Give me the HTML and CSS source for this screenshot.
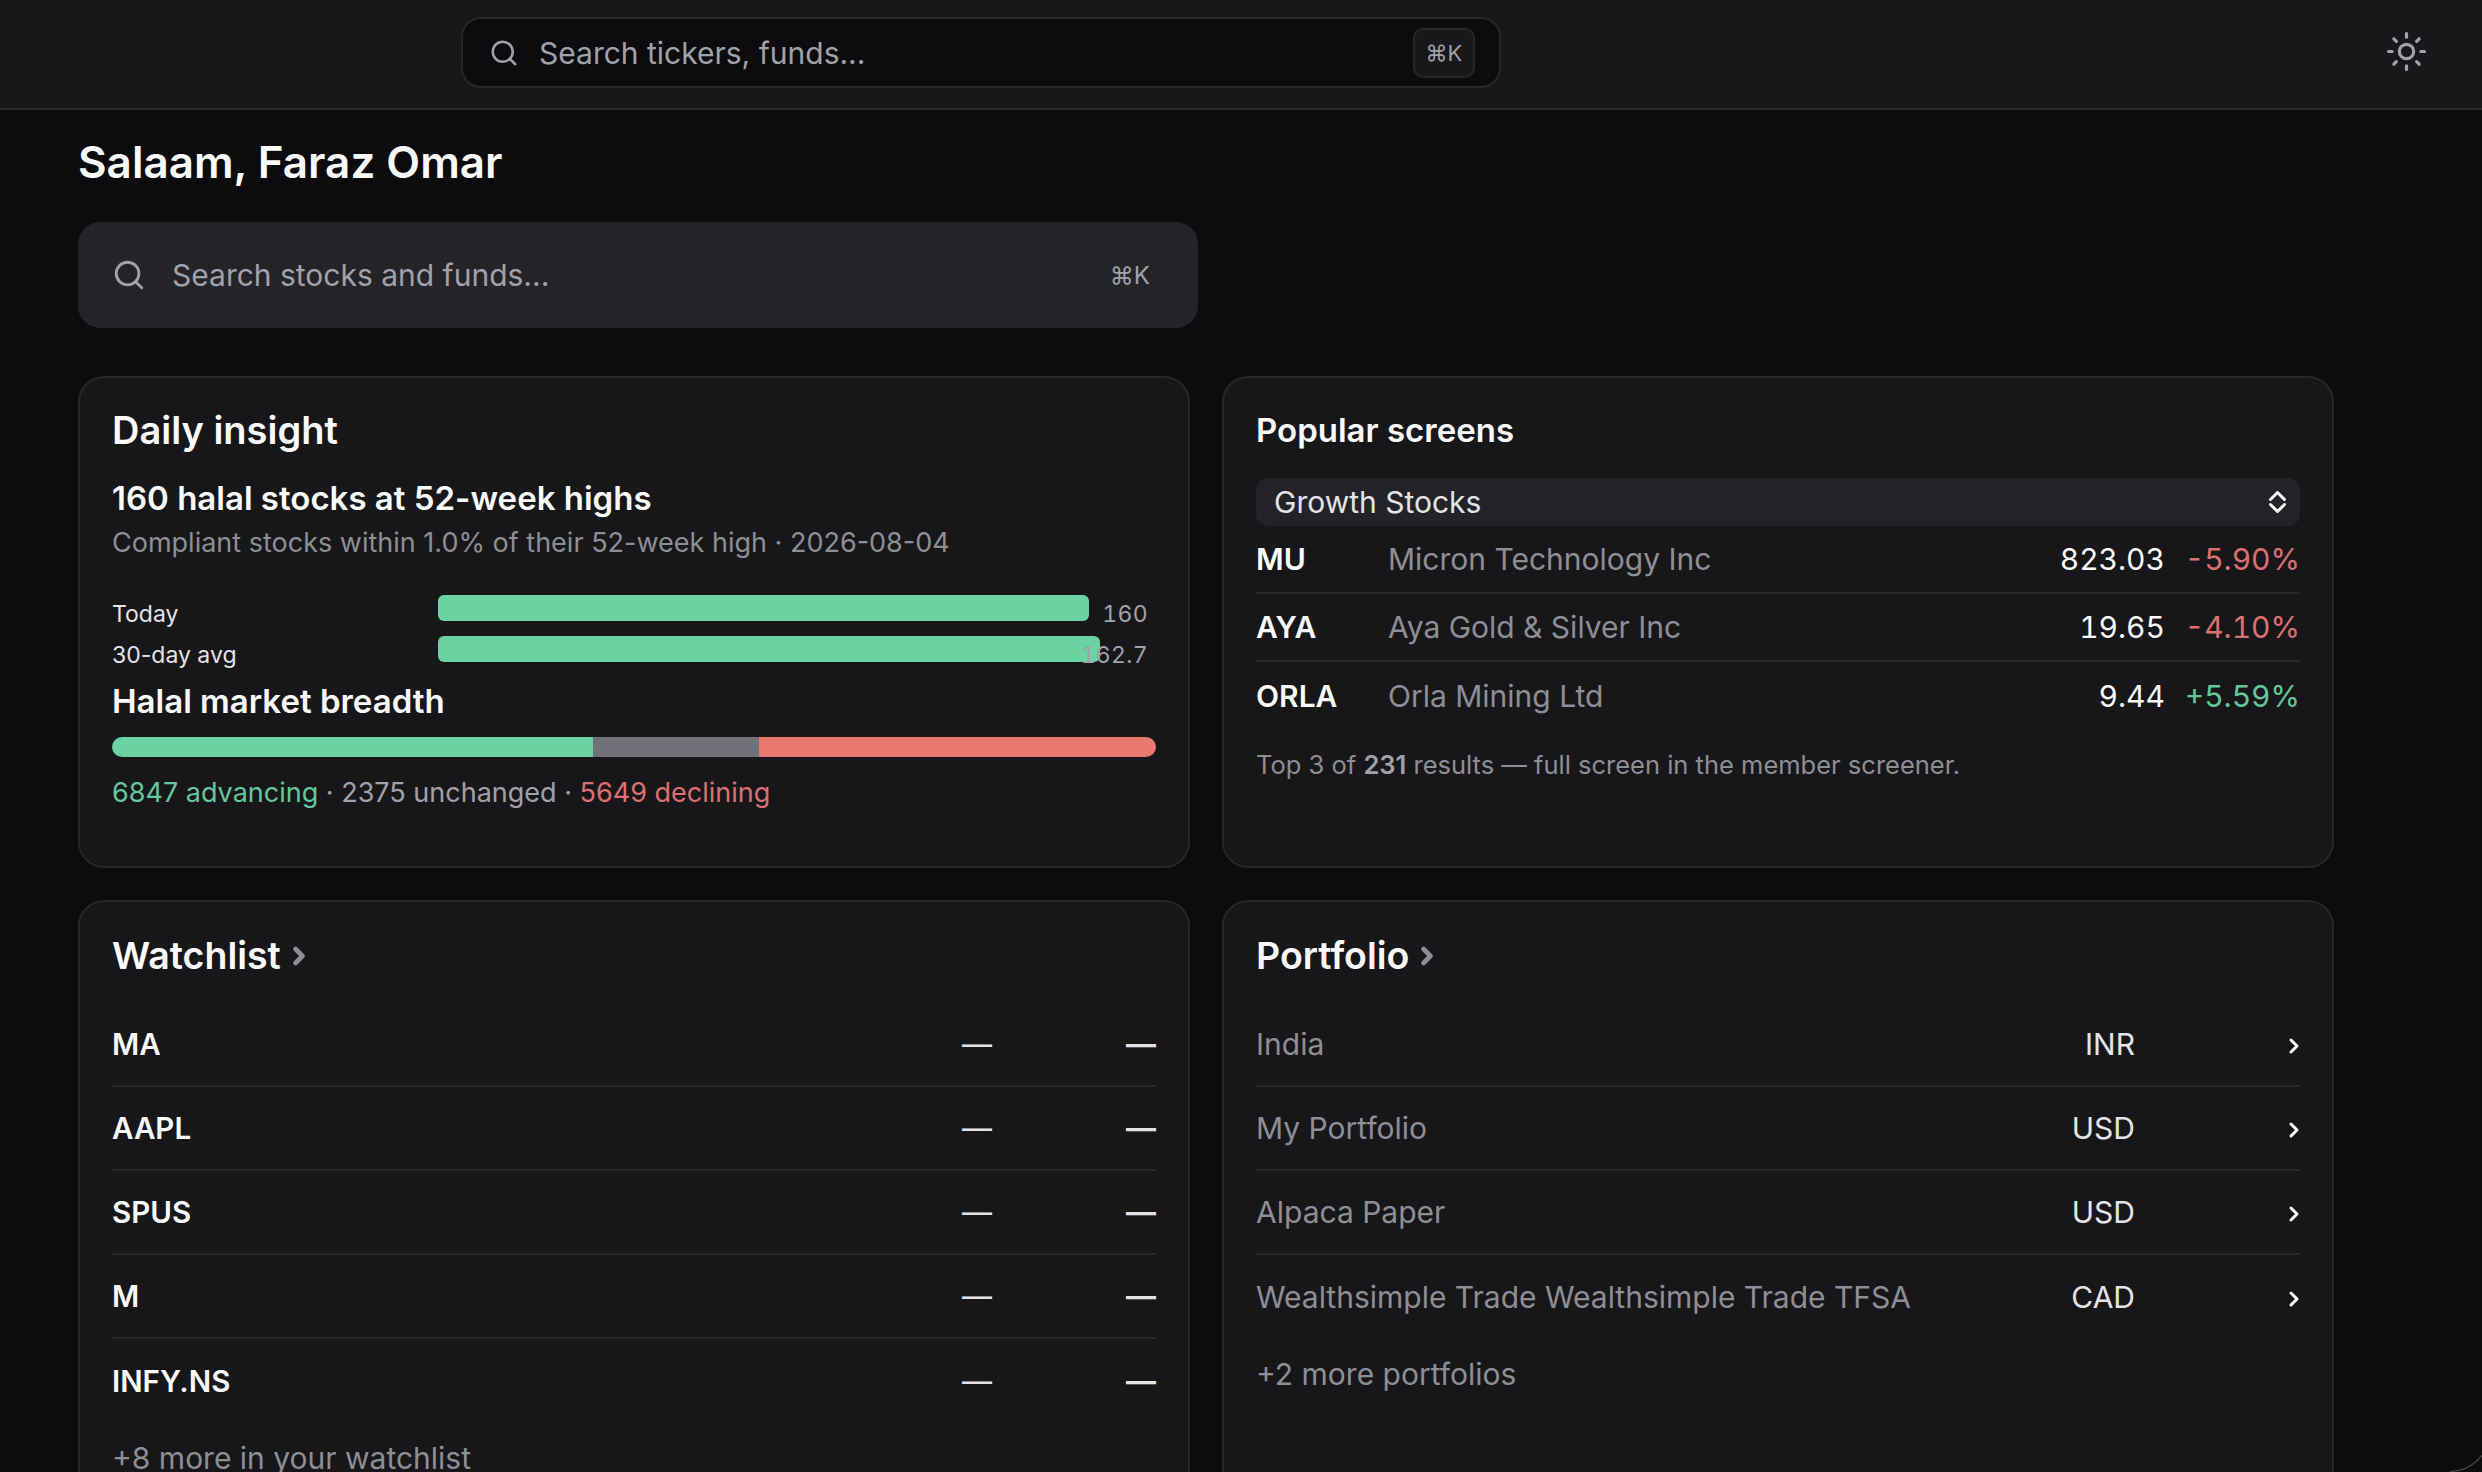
FILE: index.html
```html
<!DOCTYPE html>
<html lang="en">
<head>
<meta charset="utf-8">
<title>Dashboard</title>
<link rel="stylesheet" href="styles.css">
</head>
<body>
<svg width="0" height="0" class="defs">
  <symbol id="i-search" viewBox="0 0 24 24"><circle cx="11" cy="11" r="8"/><path d="m21 21-4.3-4.3"/></symbol>
  <symbol id="i-right" viewBox="0 0 24 24"><path d="m9 18 6-6-6-6"/></symbol>
</svg>
<header class="topbar">
  <div class="top-search">
    <svg class="icon ic-top"><use href="#i-search"/></svg>
    <span class="top-search-text">Search tickers, funds...</span>
    <kbd class="kbd">⌘K</kbd>
  </div>
  <svg class="sun" viewBox="0 0 24 24"><circle cx="12" cy="12" r="4"/><path d="M12 2v2M12 20v2M4.93 4.93l1.41 1.41M17.66 17.66l1.41 1.41M2 12h2M20 12h2M6.34 17.66l-1.41 1.41M19.07 4.93l-1.41 1.41"/></svg>
</header>
<main class="main">
  <h1 class="greeting">Salaam, Faraz Omar</h1>
  <div class="big-search">
    <svg class="icon ic-big"><use href="#i-search"/></svg>
    <span class="big-search-text">Search stocks and funds...</span>
    <span class="big-kbd">⌘K</span>
  </div>
  <div class="grid">
    <section class="card">
      <h2 class="card-title">Daily insight</h2>
      <h3 class="insight-title">160 halal stocks at 52-week highs</h3>
      <p class="insight-sub">Compliant stocks within 1.0% of their 52-week high · 2026-08-04</p>
      <div class="bars">
        <div class="bar-row">
          <span class="bar-label">Today</span>
          <div class="bar-track"><div class="bar-fill" style="width:98.3%"></div></div>
          <span class="bar-value">160</span>
        </div>
        <div class="bar-row">
          <span class="bar-label">30-day avg</span>
          <div class="bar-track"><div class="bar-fill" style="width:100%"></div></div>
          <span class="bar-value">162.7</span>
        </div>
      </div>
      <h3 class="breadth-title">Halal market breadth</h3>
      <div class="breadth">
        <div class="seg seg-up" style="width:46.1%"></div>
        <div class="seg seg-flat" style="width:15.9%"></div>
        <div class="seg seg-down" style="width:38%"></div>
      </div>
      <p class="legend"><span class="up">6847 advancing</span> · 2375 unchanged · <span class="down">5649 declining</span></p>
    </section>

    <section class="card">
      <h2 class="card-title-sm">Popular screens</h2>
      <div class="select">
        <span>Growth Stocks</span>
        <svg class="updown" viewBox="0 0 17 22"><path d="M1.5 8.5 8.5 1.5l7 7M1.5 13.5l7 7 7-7"/></svg>
      </div>
      <div class="screen-row">
        <span class="sym">MU</span><span class="name">Micron Technology Inc</span>
        <span class="price">823.03</span><span class="pct down">-5.90%</span>
      </div>
      <div class="screen-row">
        <span class="sym">AYA</span><span class="name">Aya Gold &amp; Silver Inc</span>
        <span class="price">19.65</span><span class="pct down">-4.10%</span>
      </div>
      <div class="screen-row">
        <span class="sym">ORLA</span><span class="name">Orla Mining Ltd</span>
        <span class="price">9.44</span><span class="pct up">+5.59%</span>
      </div>
      <p class="note">Top 3 of <b>231</b> results — full screen in the member screener.</p>
    </section>

    <section class="card">
      <h2 class="link-title">Watchlist <svg class="icon ic-head"><use href="#i-right"/></svg></h2>
      <div class="list">
        <div class="list-row"><span class="sym sym-wide">MA</span><span class="dash">—</span><span class="dash dash-b">—</span></div>
        <div class="list-row"><span class="sym sym-wide">AAPL</span><span class="dash">—</span><span class="dash dash-b">—</span></div>
        <div class="list-row"><span class="sym sym-wide">SPUS</span><span class="dash">—</span><span class="dash dash-b">—</span></div>
        <div class="list-row"><span class="sym sym-wide">M</span><span class="dash">—</span><span class="dash dash-b">—</span></div>
        <div class="list-row"><span class="sym sym-wide">INFY.NS</span><span class="dash">—</span><span class="dash dash-b">—</span></div>
      </div>
      <p class="more">+8 more in your watchlist</p>
    </section>

    <section class="card">
      <h2 class="link-title">Portfolio <svg class="icon ic-head"><use href="#i-right"/></svg></h2>
      <div class="list">
        <div class="list-row"><span class="pf-name">India</span><span class="ccy">INR</span><svg class="icon ic-row"><use href="#i-right"/></svg></div>
        <div class="list-row"><span class="pf-name">My Portfolio</span><span class="ccy">USD</span><svg class="icon ic-row"><use href="#i-right"/></svg></div>
        <div class="list-row"><span class="pf-name">Alpaca Paper</span><span class="ccy">USD</span><svg class="icon ic-row"><use href="#i-right"/></svg></div>
        <div class="list-row"><span class="pf-name">Wealthsimple Trade Wealthsimple Trade TFSA</span><span class="ccy">CAD</span><svg class="icon ic-row"><use href="#i-right"/></svg></div>
      </div>
      <p class="more">+2 more portfolios</p>
    </section>
  </div>
</main>
<div class="corner"></div>
</body>
</html>
```
FILE: styles.css
```css
* { box-sizing: border-box; }
html, body { height: 100%; }
body {
  margin: 0;
  overflow: hidden;
  background: #0c0c0e;
  color: #fafafa;
  font-family: Inter, "Noto Sans", sans-serif;
  font-size: 26px;
}
h1, h2, h3, p { margin: 0; font-weight: 600; }
p { font-weight: 400; }
.defs { position: absolute; }
.icon { fill: none; stroke: currentColor; stroke-linecap: round; stroke-linejoin: round; }

.topbar {
  height: 110px;
  display: flex;
  align-items: flex-start;
  background: #18181a;
  border-bottom: 2px solid #2a2a2e;
  padding: 17px 54px 0 461px;
}
.top-search {
  width: 1040px;
  height: 71px;
  display: flex;
  align-items: center;
  background: #0c0c0e;
  border: 2px solid #27272a;
  border-radius: 20px;
  padding: 0 24px 0 26px;
  color: #a1a1aa;
}
.ic-top { width: 30px; height: 30px; stroke-width: 2; flex: none; }
.top-search-text { margin-left: 20px; flex: 1; font-size: 30px; }
.kbd {
  width: 62px;
  height: 50px;
  display: flex;
  align-items: center;
  justify-content: center;
  background: #18181a;
  border: 2px solid #27272a;
  border-radius: 10px;
  font-family: Inter, "DejaVu Sans", sans-serif;
  font-size: 22px;
  color: #a1a1aa;
}
.sun {
  margin: 13px 0 0 auto;
  width: 43px;
  height: 43px;
  fill: none;
  stroke: #a1a1aa;
  stroke-width: 1.8;
  stroke-linecap: round;
}

.main { padding: 27px 148px 0 78px; }
.greeting { font-size: 44px; line-height: 50px; font-weight: 600; }
.big-search {
  margin-top: 35px;
  width: 1120px;
  height: 106px;
  display: flex;
  align-items: center;
  background: #242428;
  border-radius: 22px;
  padding: 0 48px 0 34px;
  color: #a1a1aa;
}
.ic-big { width: 34px; height: 34px; stroke-width: 2; flex: none; }
.big-search-text { margin-left: 26px; flex: 1; font-size: 30px; }
.big-kbd { font-family: Inter, "DejaVu Sans", sans-serif; font-size: 24px; }

.grid {
  margin-top: 48px;
  display: grid;
  grid-template-columns: 1fr 1fr;
  grid-template-rows: 492px auto;
  column-gap: 32px;
  row-gap: 32px;
}
.card {
  background: #17171a;
  border: 2px solid #27272a;
  border-radius: 26px;
  padding: 32px;
  min-width: 0;
}
.card-title { font-size: 38px; line-height: 40px; }
.card-title-sm { font-size: 33px; line-height: 40px; }
.insight-title { margin-top: 28px; font-size: 33px; line-height: 40px; }
.insight-sub { margin-top: 7px; font-size: 27px; line-height: 36px; color: #8e8e95; }

.bars { margin-top: 34px; }
.bar-row { height: 41px; display: flex; align-items: flex-start; }
.bar-label { width: 326px; flex: none; font-size: 23px; line-height: 38px; color: #e4e4e7; }
.bar-track { width: 662px; flex: none; height: 26px; }
.bar-fill { height: 26px; background: #6bd3a1; border-radius: 6px; }
.bar-value {
  width: 48px;
  flex: none;
  display: flex;
  justify-content: flex-end;
  font-size: 23px;
  line-height: 38px;
  letter-spacing: 0.3px;
  color: #a1a1aa;
  font-variant-numeric: tabular-nums;
  white-space: nowrap;
}

.breadth-title { margin-top: 5px; font-size: 33px; line-height: 38px; }
.breadth { margin-top: 17px; height: 20px; display: flex; border-radius: 10px; overflow: hidden; }
.seg-up { background: #6bd3a1; }
.seg-flat { background: #71717a; }
.seg-down { background: #e97871; }
.legend { margin-top: 18px; font-size: 27px; line-height: 36px; color: #a1a1aa; }
.up { color: #66c79a; }
.down { color: #dc7070; }

.select {
  margin-top: 28px;
  height: 48px;
  display: flex;
  align-items: center;
  justify-content: space-between;
  background: #232327;
  border-radius: 12px;
  padding: 0 14px 0 18px;
  font-size: 30px;
  color: #e4e4e7;
}
.updown { width: 17px; height: 22px; fill: none; stroke: #fafafa; stroke-width: 3; stroke-linecap: round; stroke-linejoin: round; }
.screen-row {
  height: 68px;
  display: flex;
  align-items: center;
  border-bottom: 2px solid #27272a;
  font-size: 30px;
}
.screen-row:last-of-type { border-bottom: 0; }
.sym { width: 132px; flex: none; font-weight: 600; }
.name { flex: 1; color: #8e8e95; }
.price { color: #fafafa; font-variant-numeric: tabular-nums; }
.pct { width: 135px; flex: none; text-align: right; font-variant-numeric: tabular-nums; }
.note { margin-top: 17px; font-size: 25.5px; line-height: 36px; color: #8e8e95; }
.note b { font-weight: 600; color: #a1a1aa; }

.link-title { display: flex; align-items: center; gap: 4px; font-size: 37.5px; line-height: 44px; }
.ic-head { width: 28px; height: 28px; stroke: #8e8e95; stroke-width: 4; }
.list { margin-top: 25px; }
.list-row {
  height: 84px;
  display: flex;
  align-items: center;
  border-bottom: 2px solid #27272a;
  font-size: 30px;
}
.list-row:last-child { border-bottom: 0; }
.sym-wide { width: auto; flex: 1; font-size: 29.5px; }
.dash { width: 164px; flex: none; text-align: right; font-weight: 400; color: #e4e4e7; }
.dash-b { font-weight: 600; }
.pf-name { flex: 1; color: #8e8e95; }
.ccy { color: #e4e4e7; }
.ic-row { width: 24px; height: 24px; stroke: #fafafa; stroke-width: 3; margin: 4px -6px 0 147px; flex: none; }
.more { margin-top: 17px; font-size: 30px; line-height: 36px; color: #8e8e95; }

.corner {
  position: fixed;
  right: -8px;
  bottom: 0;
  width: 40px;
  height: 40px;
  border-right: 1px solid #55555a;
  border-bottom: 1px solid #55555a;
  border-bottom-right-radius: 40px;
}
```
